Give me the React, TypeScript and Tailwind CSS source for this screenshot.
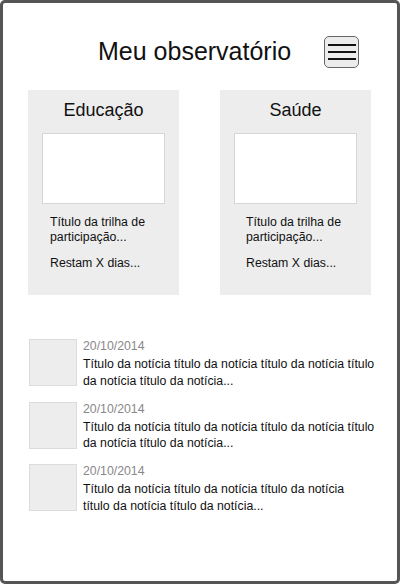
import React from "react";

const Card = ({ title, indent }: { title: string; indent: string }) => (
  <div className="w-[151px] h-[205px] bg-[#ededed] pt-[10px] px-[14px] flex flex-col">
    <div className="text-[18px] leading-[21px] text-center text-[#111]">{title}</div>
    <div className="mt-[12px] h-[71px] w-full bg-white border border-[#d6d6d6]" />
    <div className={`mt-[11px] ${indent} text-[12.3px] leading-[15px] text-[#111]`}>
      <div className="whitespace-nowrap">Título da trilha de</div>
      <div className="whitespace-nowrap">participação...</div>
      <div className="mt-[11px] whitespace-nowrap">Restam X dias...</div>
    </div>
  </div>
);

const News = ({ lines }: { lines: string[] }) => (
  <div className="flex items-start">
    <div className="mt-[2px] w-[48px] h-[47px] bg-[#ededed] border border-[#dcdcdc]" />
    <div className="ml-[6px] flex flex-col">
      <div className="text-[12.3px] leading-[18px] text-[#888]">20/10/2014</div>
      <div className="mt-[1px] text-[12.3px] leading-[16.5px] text-[#111]">
        {lines.map((l, i) => (
          <div key={i} className="whitespace-nowrap">{l}</div>
        ))}
      </div>
    </div>
  </div>
);

export default function App() {
  return (
    <div
      className="w-[400px] h-[584px] border-[3px] border-[#555555] rounded-[5px] bg-white"
      style={{ fontFamily: '"Liberation Sans", Arial, sans-serif' }}
    >
      <div className="flex items-start pt-[33px]">
        <div className="ml-[95px] mt-[1px] text-[25px] leading-[28px] text-[#111] whitespace-nowrap">
          Meu observatório
        </div>
        <button className="ml-auto mr-[38px] w-[35px] h-[32px] rounded-[5px] border border-[#666] bg-[#ececec] flex flex-col items-center justify-center gap-[5px]">
          <span className="block w-[28px] h-[2px] bg-[#111]" />
          <span className="block w-[28px] h-[2px] bg-[#111]" />
          <span className="block w-[28px] h-[2px] bg-[#111]" />
        </button>
      </div>
      <div className="mt-[22px] flex px-[25px] gap-[41px]">
        <Card title="Educação" indent="pl-[8px]" />
        <Card title="Saúde" indent="pl-[12px]" />
      </div>
      <div className="mt-[42px] pl-[26px] flex flex-col gap-[10.5px]">
        <News
          lines={[
            "Título da notícia título da notícia título da notícia título",
            "da notícia título da notícia...",
          ]}
        />
        <News
          lines={[
            "Título da notícia título da notícia título da notícia título",
            "da notícia título da notícia...",
          ]}
        />
        <News
          lines={[
            "Título da notícia título da notícia título da notícia",
            "título da notícia título da notícia...",
          ]}
        />
      </div>
    </div>
  );
}
